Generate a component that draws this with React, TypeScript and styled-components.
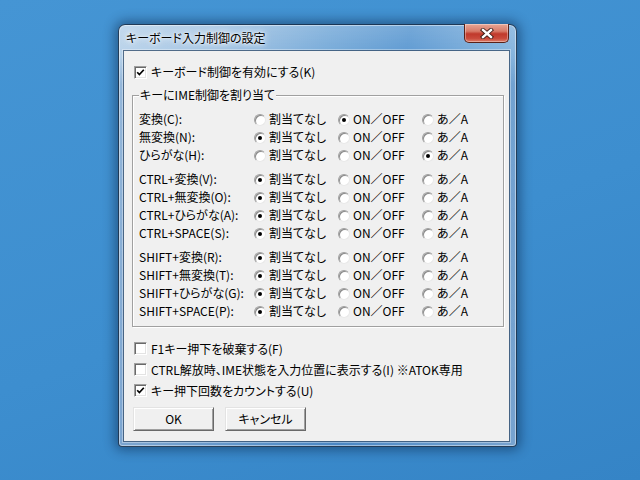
import styled, { createGlobalStyle } from "styled-components";

const GlobalStyles = createGlobalStyle`
  html, body {
    margin: 0;
    padding: 0;
  }
  body {
    font-family: "Noto Sans CJK JP", "Noto Sans", sans-serif;
    font-size: 12px;
    color: #000;
    font-feature-settings: "palt";
  }
`;

const Desktop = styled.div`
  width: 640px;
  height: 480px;
  box-sizing: border-box;
  padding: 24px 0 0 118px;
  background: linear-gradient(160deg, #4595d4 0%, #3d8ecf 55%, #3584c6 100%);
  overflow: hidden;
`;

const Window = styled.div`
  width: 399px;
  height: 423px;
  box-sizing: border-box;
  display: flex;
  flex-direction: column;
  padding: 0 7px 5px 5px;
  border: 1px solid rgba(18, 40, 66, 0.85);
  border-radius: 7px 7px 4px 4px;
  background:
    linear-gradient(180deg, rgba(255, 255, 255, 0.15) 0%, rgba(255, 255, 255, 0) 30px, rgba(40, 100, 170, 0.25) 60px, rgba(40, 100, 170, 0.35) 100%),
    linear-gradient(100deg, #bad3ea 0%, #a3c4e3 22%, #78abd9 45%, #5e9ad2 62%, #7fb0dc 80%, #a3c5e4 100%);
  box-shadow: 0 0 12px 3px rgba(0, 20, 50, 0.45), inset 0 0 0 1px rgba(255, 255, 255, 0.45);
`;

const TitleBar = styled.div`
  height: 26px;
  display: flex;
  align-items: flex-start;
  justify-content: space-between;
  flex-shrink: 0;
`;

const Title = styled.div`
  padding: 4px 0 0 2px;
  font-size: 12px;
  line-height: 18px;
  color: #000;
  text-shadow: 0 0 8px #fff, 0 0 5px rgba(255, 255, 255, 0.9), 0 0 2px rgba(255, 255, 255, 0.9);
`;

const CloseButton = styled.div`
  width: 45px;
  height: 19px;
  margin-top: -1px;
  box-sizing: border-box;
  display: flex;
  align-items: center;
  justify-content: center;
  border: 1px solid #5a2118;
  border-top: none;
  border-radius: 0 0 5px 5px;
  background: linear-gradient(180deg, #e8a796 0%, #d77a68 40%, #c0392b 55%, #c94a3b 80%, #de7e6a 100%);
  box-shadow: inset 0 0 0 1px rgba(255, 255, 255, 0.35);
`;

const Client = styled.div`
  flex: 1;
  display: flex;
  flex-direction: column;
  background: #f0f0f0;
  padding: 12px 5px 10px 8px;
  box-shadow: 0 0 0 1px rgba(28, 58, 92, 0.7), 0 0 0 2px rgba(255, 255, 255, 0.35);
`;

const CheckRow = styled.div<{ $height: number }>`
  height: ${({ $height }) => $height}px;
  display: flex;
  align-items: center;
  padding-left: 2px;
  line-height: 14px;
  white-space: nowrap;
`;

const CheckBox = styled.span`
  width: 13px;
  height: 13px;
  box-sizing: border-box;
  flex-shrink: 0;
  margin-right: 4px;
  display: flex;
  align-items: center;
  justify-content: center;
  background: #fff;
  border: 1px solid;
  border-color: #a0a0a0 #fff #fff #a0a0a0;
  box-shadow: inset 1px 1px 0 #696969, inset -1px -1px 0 #e3e3e3;
`;

const GroupBox = styled.fieldset`
  margin: 7px 0 11px 0;
  padding: 8px 6px 6px 6px;
  border: 1px solid #a0a0a0;
  box-shadow: inset 1px 1px 0 #fff, 1px 1px 0 #fff;
`;

const GroupTitle = styled.legend`
  padding: 0 1px;
  line-height: 14px;
  background: #f0f0f0;
`;

const RowSet = styled.div`
  & + & {
    margin-top: 6px;
  }
`;

const OptionRow = styled.div`
  height: 18px;
  display: grid;
  grid-template-columns: 115px 84px 84px auto;
  align-items: center;
  line-height: 14px;
  white-space: nowrap;
`;

const Option = styled.span`
  display: flex;
  align-items: center;
`;

const Radio = styled.span<{ $checked: boolean }>`
  width: 12px;
  height: 12px;
  box-sizing: border-box;
  margin: 1px 3px 0 0;
  border-radius: 50%;
  flex-shrink: 0;
  display: flex;
  align-items: center;
  justify-content: center;
  background: #fff;
  border: 1px solid;
  border-color: #a0a0a0 #e8e8e8 #e8e8e8 #a0a0a0;
  box-shadow: inset 1px 1px 0 #8a8a8a;

  &::after {
    content: "";
    width: 4px;
    height: 4px;
    border-radius: 50%;
    background: #000;
    display: ${({ $checked }) => ($checked ? "block" : "none")};
  }
`;

const ButtonRow = styled.div`
  display: flex;
  gap: 11px;
  margin-top: 6px;
  padding-left: 1px;
`;

const Button = styled.div`
  width: 81px;
  height: 24px;
  box-sizing: border-box;
  display: flex;
  align-items: center;
  justify-content: center;
  background: #f0f0f0;
  border: 1px solid;
  border-color: #e3e3e3 #696969 #696969 #e3e3e3;
  box-shadow: inset 1px 1px 0 #fff, inset -1px -1px 0 #a0a0a0;
  line-height: 14px;
`;

const Check = () => (
  <svg width="9" height="9" viewBox="0 0 9 9">
    <polyline points="1.2,4.2 3.4,6.6 7.8,1.8" fill="none" stroke="#000" strokeWidth="1.7" />
  </svg>
);

const CloseGlyph = () => (
  <svg width="14" height="11" viewBox="0 0 14 11">
    <path d="M3 2 L11 9 M11 2 L3 9" stroke="#3a1a14" strokeWidth="4.2" strokeLinecap="square" />
    <path d="M3 2 L11 9 M11 2 L3 9" stroke="#fff" strokeWidth="2.4" strokeLinecap="square" />
  </svg>
);

const options = ["割当てなし", "ON／OFF", "あ／A"];

const groups: [string, number][][] = [
  [
    ["変換(C):", 1],
    ["無変換(N):", 0],
    ["ひらがな(H):", 2],
  ],
  [
    ["CTRL+変換(V):", 0],
    ["CTRL+無変換(O):", 0],
    ["CTRL+ひらがな(A):", 0],
    ["CTRL+SPACE(S):", 0],
  ],
  [
    ["SHIFT+変換(R):", 0],
    ["SHIFT+無変換(T):", 0],
    ["SHIFT+ひらがな(G):", 0],
    ["SHIFT+SPACE(P):", 0],
  ],
];

const extras: [string, boolean][] = [
  ["F1キー押下を破棄する(F)", false],
  ["CTRL解放時、IME状態を入力位置に表示する(I) ※ATOK専用", false],
  ["キー押下回数をカウントする(U)", true],
];

export default function App() {
  return (
    <>
      <GlobalStyles />
      <Desktop>
        <Window>
          <TitleBar>
            <Title>キーボード入力制御の設定</Title>
            <CloseButton>
              <CloseGlyph />
            </CloseButton>
          </TitleBar>
          <Client>
            <CheckRow $height={18}>
              <CheckBox>
                <Check />
              </CheckBox>
              キーボード制御を有効にする(K)
            </CheckRow>

            <GroupBox>
              <GroupTitle>キーにIME制御を割り当て</GroupTitle>
              {groups.map((rows, gi) => (
                <RowSet key={gi}>
                  {rows.map(([label, sel]) => (
                    <OptionRow key={label}>
                      <span>{label}</span>
                      {options.map((opt, oi) => (
                        <Option key={opt}>
                          <Radio $checked={oi === sel} />
                          {opt}
                        </Option>
                      ))}
                    </OptionRow>
                  ))}
                </RowSet>
              ))}
            </GroupBox>

            {extras.map(([text, on]) => (
              <CheckRow key={text} $height={21}>
                <CheckBox>{on && <Check />}</CheckBox>
                {text}
              </CheckRow>
            ))}

            <ButtonRow>
              <Button>OK</Button>
              <Button>キャンセル</Button>
            </ButtonRow>
          </Client>
        </Window>
      </Desktop>
    </>
  );
}
